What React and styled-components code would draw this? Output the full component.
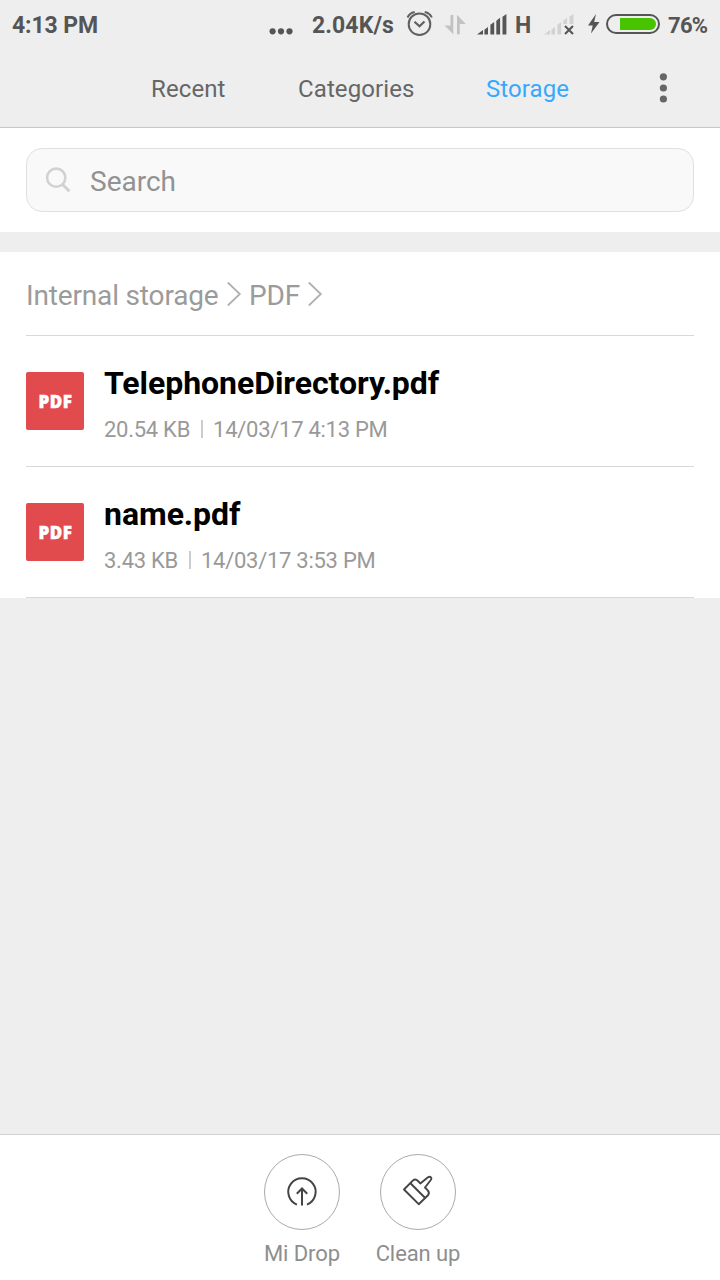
import React from 'react';
import styled, { createGlobalStyle } from 'styled-components';

const GlobalStyle = createGlobalStyle`
  * { box-sizing: border-box; }
  body {
    margin: 0;
    background: #eeeeee;
    font-family: Roboto, "Liberation Sans", sans-serif;
  }
`;

const Screen = styled.div`
  width: 720px;
  height: 1280px;
  display: flex;
  flex-direction: column;
  background: #eeeeee;
  overflow: hidden;
`;

const StatusBar = styled.header`
  height: 50px;
  flex: none;
  display: flex;
  align-items: center;
  padding-left: 12px;
  color: #555555;
  white-space: nowrap;
`;

const StatusText = styled.span`
  width: ${p => p.$width}px;
  flex: none;
  padding-top: 2px;
  line-height: 48px;
  font-size: ${p => p.$size || 23}px;
  font-weight: 700;
  letter-spacing: ${p => p.$spacing || 0}px;
`;

const Icon = styled.svg`
  display: block;
  flex: none;
`;

const TabBar = styled.nav`
  height: 78px;
  flex: none;
  display: flex;
  align-items: center;
  padding-left: 151px;
  border-bottom: 1px solid #c8c8c8;
`;

const Tab = styled.a`
  width: ${p => p.$width}px;
  flex: none;
  font-size: 24px;
  line-height: 78px;
  letter-spacing: 0.1px;
  color: ${p => (p.$active ? '#37a9fc' : '#666666')};
`;

const SearchPanel = styled.section`
  flex: none;
  height: 104px;
  padding: 20px 26px;
  background: #ffffff;
`;

const SearchField = styled.div`
  height: 64px;
  display: flex;
  align-items: center;
  gap: 17px;
  padding-left: 16px;
  border: 1px solid #e0e0e0;
  border-radius: 16px;
  background: #f9f9f9;
  color: #929292;
  font-size: 28px;
`;

const SearchLabel = styled.span`
  line-height: 58px;
  padding-top: 4px;
`;

const Files = styled.main`
  flex: none;
  margin-top: 20px;
  padding: 0 26px;
  background: #ffffff;
`;

const Breadcrumb = styled.div`
  height: 84px;
  display: flex;
  align-items: center;
  border-bottom: 1px solid #d8d8d8;
  font-size: 28px;
  color: #9b9b9b;
`;

const Crumb = styled.span`
  width: ${p => p.$width}px;
  flex: none;
  line-height: 84px;
  padding-top: 4px;
  letter-spacing: -0.16px;
  white-space: nowrap;
`;

const FileRow = styled.article`
  height: 131px;
  display: flex;
  gap: 20px;
  border-bottom: 1px solid #d8d8d8;
`;

const FileBadge = styled.div`
  width: 58px;
  height: 58px;
  margin-top: 36px;
  border-radius: 2px;
  background: #e24b4e;
  color: #ffffff;
  font: 800 17px/59px "Open Sans", sans-serif;
  letter-spacing: 0.5px;
  padding-left: 1px;
  text-align: center;
  -webkit-text-stroke: 0.5px #ffffff;
`;

const FileInfo = styled.div`
  display: flex;
  flex-direction: column;
  padding-top: 28px;
`;

const FileName = styled.div`
  font-size: 32px;
  font-weight: 700;
  line-height: 38px;
  letter-spacing: -0.05px;
  color: #000000;
`;

const FileMeta = styled.div`
  display: flex;
  align-items: center;
  margin-top: 14px;
  font-size: 22px;
  line-height: 28px;
  letter-spacing: -0.27px;
  color: #999999;
`;

const Separator = styled.i`
  width: 2px;
  height: 18px;
  margin: 0 10px 2px 11px;
  background: #cccccc;
`;

const BottomBar = styled.footer`
  height: 146px;
  flex: none;
  margin-top: auto;
  display: flex;
  justify-content: center;
  padding-top: 19px;
  border-top: 1px solid #d2d2d2;
  background: #ffffff;
`;

const Action = styled.div`
  width: 116px;
  display: flex;
  flex-direction: column;
  align-items: center;
  font-size: 22px;
  line-height: 28px;
  letter-spacing: -0.08px;
  color: #8e8e8e;
`;

const Circle = styled.div`
  width: 76px;
  height: 76px;
  margin-bottom: 10px;
  display: grid;
  place-items: center;
  border: 1px solid #aaaaaa;
  border-radius: 50%;
`;

const Chevron = () => (
  <Icon width="31" height="30" viewBox="0 0 31 30" fill="none" stroke="#b0b0b0" strokeWidth="1.8">
    <path d="M9.8 3.5 21.8 15 9.8 26.5" />
  </Icon>
);

const SignalBars = () => (
  <>
    <path d="M0 20.5 6 16v4.5z" />
    <path d="M7.4 15.8 11 13v7.5H7.4z" />
    <path d="M13.4 10.8 17.2 8v12.5h-3.8z" />
    <path d="M19.3 6.8 23.1 3.8v16.7h-3.8z" />
    <path d="M25.5 2.7 29.4 0v20.5h-3.9z" />
  </>
);

const files = [
  { name: 'TelephoneDirectory.pdf', size: '20.54 KB', date: '14/03/17 4:13 PM' },
  { name: 'name.pdf', size: '3.43 KB', date: '14/03/17 3:53 PM' },
];

export default function App() {
  return (
    <Screen>
      <GlobalStyle />
      <StatusBar>
        <StatusText $width={257} $spacing={-0.1}>4:13 PM</StatusText>
        <Icon width="43" height="50" viewBox="269 0 43 50" fill="#555555">
          <circle cx="272.6" cy="31.3" r="3.1" />
          <circle cx="281" cy="31.3" r="3.1" />
          <circle cx="289.5" cy="31.3" r="3.1" />
        </Icon>
        <StatusText $width={92} $spacing={0.1}>2.04K/s</StatusText>
        <Icon width="40" height="50" viewBox="404 0 40 50" fill="none" stroke="#606060" strokeWidth="2">
          <circle cx="419.5" cy="24.2" r="10.8" />
          <path d="M414.5 21.8 419.5 26.3 424.5 21.5" strokeWidth="2.2" />
          <path d="M407.5 17.5Q409.3 13.2 414.7 12M424.7 12Q430.1 13.2 431.8 17.5" />
        </Icon>
        <Icon width="33" height="50" viewBox="444 0 33 50" fill="#c2c2c2">
          <path d="M450.5 15h2.8v19.3l-8.8-8.8h6z" />
          <path d="M457 34.3h2.8V24h6L457 14.8z" />
        </Icon>
        <Icon width="38" height="50" viewBox="477 0 38 50" fill="#555555">
          <g transform="translate(477 14)"><SignalBars /></g>
        </Icon>
        <StatusText $width={29}>H</StatusText>
        <Icon width="44" height="50" viewBox="544 0 44 50" fill="#d2d2d2">
          <g transform="translate(544 14)"><SignalBars /></g>
          <path d="M563 24h12v12h-12z" fill="#eeeeee" />
          <path d="m565 26 8 8m0-8-8 8" stroke="#555555" strokeWidth="2.1" />
        </Icon>
        <Icon width="18" height="50" viewBox="588 0 18 50" fill="#555555">
          <path d="M596 14 588 25.5h4.7l-1.7 8 8.5-11.5h-5.3z" />
        </Icon>
        <Icon width="62" height="50" viewBox="606 0 62 50">
          <rect x="607" y="15" width="52" height="18" rx="9" fill="none" stroke="#555555" strokeWidth="2" />
          <path d="M620 18h30a6 6 0 0 1 0 12h-30z" fill="#47c300" />
        </Icon>
        <StatusText $width={46} $size={22} $spacing={-0.7}>76%</StatusText>
      </StatusBar>

      <TabBar>
        <Tab $width={147}>Recent</Tab>
        <Tab $width={188}>Categories</Tab>
        <Tab $width={170} $active>Storage</Tab>
        <Icon width="14" height="36" viewBox="0 0 14 36" fill="#666666">
          <circle cx="7.4" cy="5.8" r="3.6" />
          <circle cx="7.4" cy="17" r="3.6" />
          <circle cx="7.4" cy="28" r="3.6" />
        </Icon>
      </TabBar>

      <SearchPanel>
        <SearchField>
          <Icon width="30" height="30" viewBox="43 165 30 30" fill="none" stroke="#d2d2d2" strokeWidth="2.6">
            <circle cx="56.2" cy="177.7" r="9.1" />
            <path d="m62.4 184.3 7 7" strokeWidth="3" />
          </Icon>
          <SearchLabel>Search</SearchLabel>
        </SearchField>
      </SearchPanel>

      <Files>
        <Breadcrumb>
          <Crumb $width={192}>Internal storage</Crumb>
          <Chevron />
          <Crumb $width={50}>PDF</Crumb>
          <Chevron />
        </Breadcrumb>
        {files.map(file => (
          <FileRow key={file.name}>
            <FileBadge>PDF</FileBadge>
            <FileInfo>
              <FileName>{file.name}</FileName>
              <FileMeta>
                {file.size}
                <Separator />
                {file.date}
              </FileMeta>
            </FileInfo>
          </FileRow>
        ))}
      </Files>

      <BottomBar>
        <Action>
          <Circle>
            <Icon width="36" height="36" viewBox="284 1174 36 36" fill="none" stroke="#444444" strokeWidth="2">
              <path d="M296.9 1204.6A13.7 13.7 0 1 1 307 1204.6" />
              <path d="M302 1205.5V1188.5M296.8 1193.7l5.2-5.2 5.2 5.2" />
            </Icon>
          </Circle>
          Mi Drop
        </Action>
        <Action>
          <Circle>
            <Icon width="36" height="36" viewBox="400 1174 36 36" fill="none" stroke="#444444" strokeWidth="1.9" strokeLinejoin="round">
              <path d="M404 1189.5 413 1180.4Q415.5 1178.4 418 1181L420.3 1183.4 428 1177.3C430.5 1175.7 432.4 1178 430.8 1180L425 1187.5 427.5 1190.1Q430 1192.7 428 1195.2L418.7 1204.2Z" />
              <path d="M410.7 1183.5 425.2 1198" />
            </Icon>
          </Circle>
          Clean up
        </Action>
      </BottomBar>
    </Screen>
  );
}
